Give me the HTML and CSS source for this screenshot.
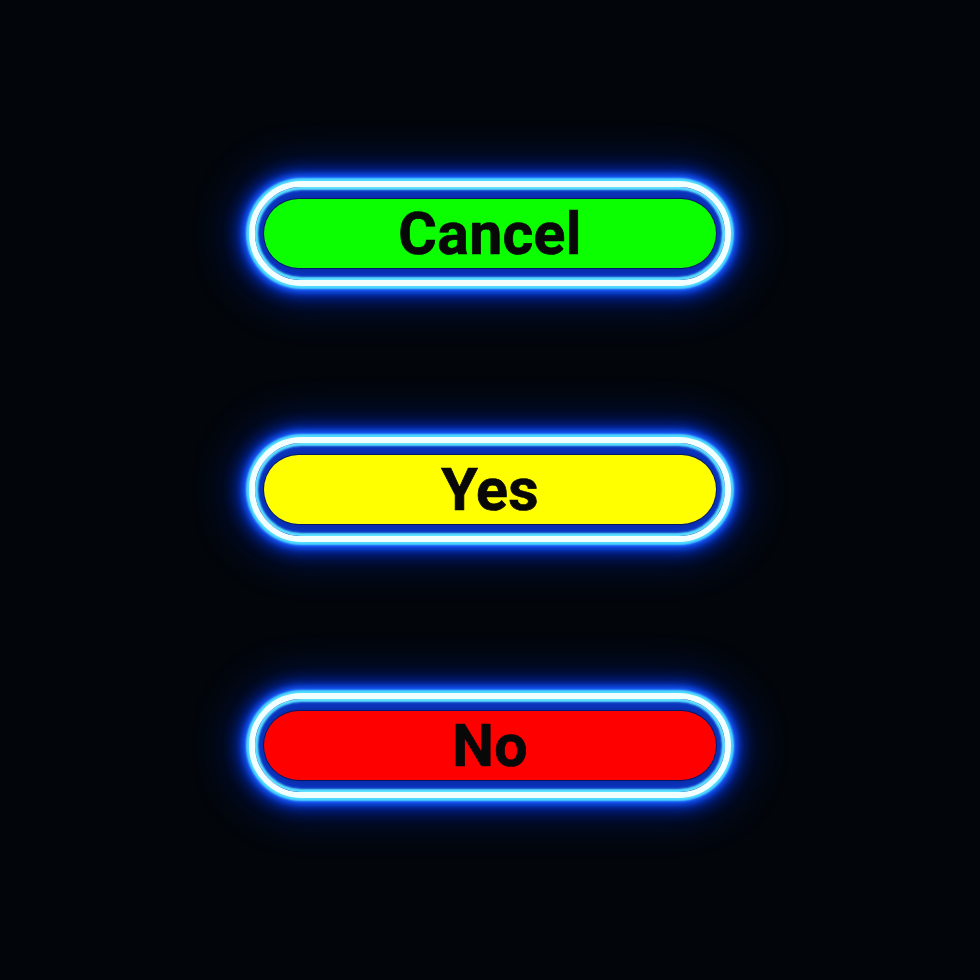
FILE: index.html
```html
<!DOCTYPE html>
<html lang="en">
<head>
<meta charset="utf-8">
<title>Dialog buttons</title>
<link rel="stylesheet" href="styles.css">
</head>
<body>
  <main class="stack">
    <button class="neon" type="button"><span class="pill pill-green">Cancel</span></button>
    <button class="neon" type="button"><span class="pill pill-yellow">Yes</span></button>
    <button class="neon" type="button"><span class="pill pill-red">No</span></button>
  </main>
</body>
</html>
```

FILE: styles.css
```css
html, body {
  margin: 0;
  padding: 0;
  background: #02060b;
  height: 100%;
}

.stack {
  display: flex;
  flex-direction: column;
  align-items: center;
  gap: 151px;
  padding-top: 181px;
}

/* neon tube around each button */
.neon {
  box-sizing: border-box;
  width: 482px;
  height: 105px;
  padding: 12px 9px;
  margin: 0;
  border: 6px solid #f2ffff;
  border-radius: 53px;
  background: #0a2ca6;
  cursor: pointer;
  display: flex;
  box-shadow:
    inset 0 0 2px 3px #5ee2ff,
    inset 0 0 8px 6px #0c3ad0,
    0 0 2px 3px #4fdcff,
    0 0 6px 6px #1a5cff,
    0 0 16px 10px rgba(0, 56, 235, 0.85),
    0 0 38px 18px rgba(0, 36, 170, 0.45);
}

.pill {
  flex: 1;
  display: flex;
  align-items: center;
  justify-content: center;
  border-radius: 36px;
  box-shadow: 0 0 0 1px rgba(0, 10, 60, 0.6);
  font-family: Roboto, "Liberation Sans", sans-serif;
  font-weight: 700;
  font-size: 59px;
  color: #080808;
  line-height: 1;
  letter-spacing: 0.3px;
  -webkit-text-stroke: 0.7px #080808;
}

.pill-green { background: #0cff00; }
.pill-yellow { background: #ffff00; }
.pill-red { background: #ff0000; }
```
